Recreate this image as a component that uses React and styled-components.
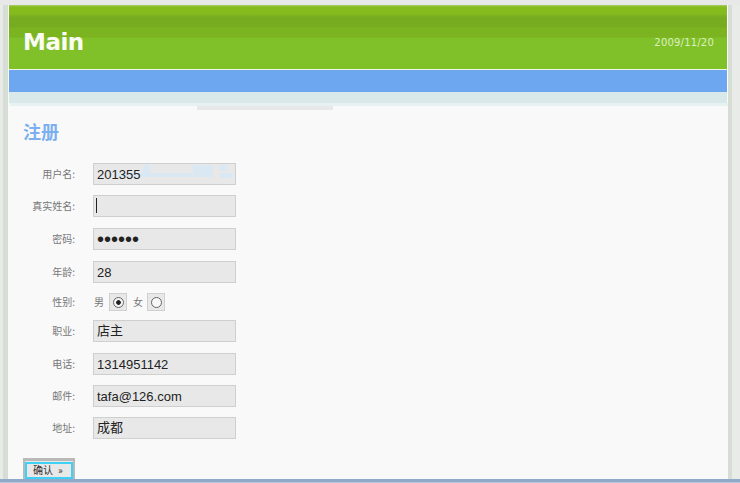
import styled, { createGlobalStyle } from "styled-components";

const GlobalStyle = createGlobalStyle`
  html, body {
    margin: 0;
    padding: 0;
    background: #e9ebe8;
  }
`;

const Viewport = styled.div`
  width: 740px;
  height: 483px;
  overflow: hidden;
  display: flex;
  flex-direction: column;
  background: #e9ebe8;
`;

const TopGap = styled.div`
  height: 5px;
  flex: none;
  background: #e8e8e8;
`;

const Columns = styled.div`
  flex: 1;
  min-height: 0;
  display: flex;
  padding-left: 3px;
`;

const SideStrip = styled.div`
  flex: none;
  width: ${({ $width }) => $width}px;
  background: #d6ddd5;
`;

const Page = styled.main`
  width: 720px;
  flex: none;
  display: flex;
  flex-direction: column;
  background: #f9f9f9;
`;

const Header = styled.header`
  height: 65px;
  box-sizing: border-box;
  flex: none;
  margin-left: 1px;
  border-right: 1px solid #fff;
  border-bottom: 1px solid #f0f7e0;
  padding: 0 13px 0 14px;
  display: flex;
  align-items: flex-start;
  justify-content: space-between;
  background: linear-gradient(
    to bottom,
    #a9cf6a 0,
    #86bc1e 2px,
    #84bb1e 9px,
    #78ac20 12px,
    #78ac20 22px,
    #7cb320 23px,
    #7cb320 32px,
    #80c028 33px,
    #80c028 100%
  );
`;

const Logo = styled.h1`
  margin: 23px 0 0;
  font: bold 23px/28px "DejaVu Sans", sans-serif;
  letter-spacing: -0.5px;
  color: #fbfdf5;
`;

const DateText = styled.span`
  margin-top: 31px;
  font: 10px/13px "DejaVu Sans", sans-serif;
  letter-spacing: 0.2px;
  color: #dcefc0;
`;

const NavBar = styled.nav`
  height: 22px;
  flex: none;
  margin-left: 1px;
  border-right: 1px solid #fff;
  background: #6da7ef;
`;

const SubBar = styled.div`
  height: 11px;
  flex: none;
  margin-left: 1px;
  margin-right: 1px;
  background: #d9e8e8;
`;

const SubBarEdge = styled.div`
  height: 3px;
  flex: none;
  margin-left: 2px;
  background: #e8f1f1;
`;

const Content = styled.section`
  flex: 1;
  min-height: 0;
  display: flex;
  flex-direction: column;
  padding-left: 15px;
`;

const ScrollMark = styled.div`
  width: 136px;
  height: 4px;
  flex: none;
  margin-left: 174px;
  background: #e8e8e8;
`;

const Title = styled.h2`
  margin: 10px 0 0;
  font: bold 18px/22px "Noto Sans CJK SC", sans-serif;
  color: #7caff0;
`;

const Form = styled.form`
  margin-top: 21px;
  display: flex;
  flex-direction: column;
`;

const Row = styled.div`
  display: flex;
  align-items: center;
  height: ${({ $height }) => $height || 22}px;
  margin-bottom: ${({ $gap }) => $gap}px;
`;

const Label = styled.label`
  width: 52px;
  flex: none;
  margin-right: 18px;
  text-align: right;
  font: 10px/12px "Noto Sans CJK SC", sans-serif;
  color: #777;
`;

const FieldWrap = styled.div`
  position: relative;
  width: 143px;
  height: 22px;
  background: #e8e8e8;
`;

const Field = styled.input`
  position: relative;
  display: block;
  width: 100%;
  height: 100%;
  box-sizing: border-box;
  margin: 0;
  padding: 0 3px ${({ $cjk }) => ($cjk ? 3 : 0)}px;
  border: 1px solid #cfcfcf;
  border-radius: 0;
  outline: none;
  background: transparent;
  font: ${({ type }) => (type === "password" ? 20 : 13)}px "Liberation Sans",
    "Noto Sans CJK SC", sans-serif;
  color: #222;
`;

const Caret = styled.span`
  position: absolute;
  left: 3px;
  top: 3px;
  width: 1px;
  height: 15px;
  background: #222;
`;

const Smudge = styled.svg`
  position: absolute;
  left: 0;
  top: 0;
`;

const GenderText = styled.span`
  font: 10px/12px "Noto Sans CJK SC", sans-serif;
  color: #777;
  margin-right: ${({ $gap }) => $gap}px;

  &:first-of-type {
    margin-left: 1px;
  }
`;

const RadioBox = styled.span`
  width: 18px;
  height: 18px;
  box-sizing: border-box;
  flex: none;
  display: flex;
  align-items: center;
  justify-content: center;
  margin-right: 6px;
  border: 1px solid #d0d0d0;
  background: #e8e8e8;
`;

const RadioDot = styled.span`
  width: 11px;
  height: 11px;
  box-sizing: border-box;
  border-radius: 50%;
  border: 1px solid #666;
  background: ${({ $on }) =>
    $on ? "radial-gradient(circle, #222 0 2px, #f4f4f4 2.6px)" : "#f8f8f8"};
`;

const SubmitRow = styled.div`
  margin-top: 19px;
`;

const SubmitButton = styled.button`
  display: block;
  width: 52px;
  height: 21px;
  box-sizing: border-box;
  padding: 0;
  border: 2px solid #b9b9b9;
  border-top-width: 3px;
  border-bottom: none;
  background: #e8e8e8;
  font: 10px/12px "Noto Sans CJK SC", sans-serif;
  color: #333;
`;

const SubmitInner = styled.span`
  display: flex;
  gap: 5px;
  align-items: center;
  height: 17px;
  width: 48px;
  box-sizing: border-box;
  padding-left: 6px;
  border: 2px solid #3fd0f5;
  background: #e8e8e8;
`;

const BottomLine = styled.div`
  height: 4px;
  flex: none;
  background: linear-gradient(to bottom, #8fa9c9 0, #8fa9c9 3px, #b8c6d8 3px);
`;

const fields = [
  { label: "用户名:", value: "201355", gap: 10, smudge: true },
  { label: "真实姓名:", value: "", gap: 11, caret: true },
  { label: "密码:", value: "123456", type: "password", gap: 11 },
  { label: "年龄:", value: "28", gap: 10 },
];

const moreFields = [
  { label: "职业:", value: "店主", gap: 11, cjk: true },
  { label: "电话:", value: "1314951142", gap: 10 },
  { label: "邮件:", value: "tafa@126.com", gap: 10 },
  { label: "地址:", value: "成都", gap: 0, cjk: true },
];

function FieldRow({ label, value, type, gap, caret, smudge, cjk }) {
  return (
    <Row $gap={gap}>
      <Label>{label}</Label>
      <FieldWrap>
        {smudge && (
          <Smudge width="143" height="22" viewBox="0 0 143 22">
            <path
              d="M50 2h7v8h43V2h20v12H22v-4h28zM127 2h7v6h-7zM127 10h13v5h-13z"
              fill="#d9e8f2"
            />
          </Smudge>
        )}
        <Field type={type || "text"} value={value} $cjk={cjk} readOnly />
        {caret && <Caret />}
      </FieldWrap>
    </Row>
  );
}

export default function App() {
  return (
    <Viewport>
      <GlobalStyle />
      <TopGap />
      <Columns>
        <SideStrip $width={5} />
        <Page>
          <Header>
            <Logo>Main</Logo>
            <DateText>2009/11/20</DateText>
          </Header>
          <NavBar />
          <SubBar />
          <SubBarEdge />
          <Content>
            <ScrollMark />
            <Title>注册</Title>
            <Form>
              {fields.map((field) => (
                <FieldRow key={field.label} {...field} />
              ))}
              <Row $height={18} $gap={9}>
                <Label>性别:</Label>
                <GenderText $gap={5}>男</GenderText>
                <RadioBox>
                  <RadioDot $on />
                </RadioBox>
                <GenderText $gap={4}>女</GenderText>
                <RadioBox>
                  <RadioDot />
                </RadioBox>
              </Row>
              {moreFields.map((field) => (
                <FieldRow key={field.label} {...field} />
              ))}
              <SubmitRow>
                <SubmitButton type="button">
                  <SubmitInner>
                    确认<span>»</span>
                  </SubmitInner>
                </SubmitButton>
              </SubmitRow>
            </Form>
          </Content>
        </Page>
        <SideStrip $width={4} />
      </Columns>
      <BottomLine />
    </Viewport>
  );
}
